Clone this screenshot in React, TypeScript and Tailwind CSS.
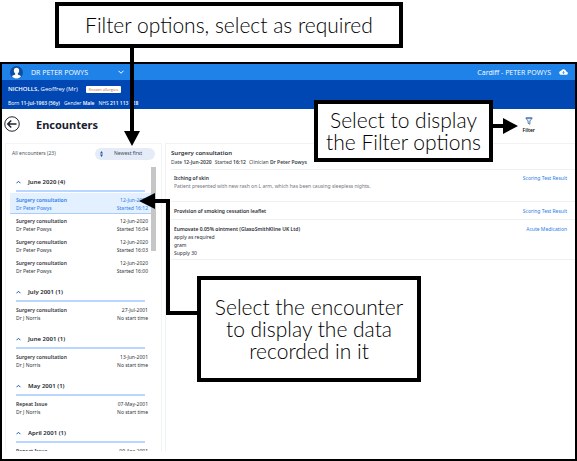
import React, { useState } from "react";
import clsx from "clsx";

interface Encounter {
  title: string;
  clinician: string;
  date: string;
  time: string;
}

interface EncounterGroup {
  label: string;
  encounters: Encounter[];
}

interface RecordEntry {
  title: string;
  lines: string[];
  muted?: boolean;
  link: string;
  className: string;
}

const GROUPS: EncounterGroup[] = [
  {
    label: "June 2020 (4)",
    encounters: [
      { title: "Surgery consultation", clinician: "Dr Peter Powys", date: "12-Jun-2020", time: "Started 16:12" },
      { title: "Surgery consultation", clinician: "Dr Peter Powys", date: "12-Jun-2020", time: "Started 16:04" },
      { title: "Surgery consultation", clinician: "Dr Peter Powys", date: "12-Jun-2020", time: "Started 16:03" },
      { title: "Surgery consultation", clinician: "Dr Peter Powys", date: "12-Jun-2020", time: "Started 16:00" },
    ],
  },
  {
    label: "July 2001 (1)",
    encounters: [
      { title: "Surgery consultation", clinician: "Dr J Norris", date: "27-Jul-2001", time: "No start time" },
    ],
  },
  {
    label: "June 2001 (1)",
    encounters: [
      { title: "Surgery consultation", clinician: "Dr J Norris", date: "13-Jun-2001", time: "No start time" },
    ],
  },
  {
    label: "May 2001 (1)",
    encounters: [{ title: "Repeat Issue", clinician: "Dr J Norris", date: "07-May-2001", time: "No start time" }],
  },
  {
    label: "April 2001 (1)",
    encounters: [{ title: "Repeat Issue", clinician: "Dr J Norris", date: "09-Apr-2001", time: "No start time" }],
  },
];

const ENTRIES: RecordEntry[] = [
  {
    title: "Itching of skin",
    lines: ["Patient presented with new rash on L arm, which has been causing sleepless nights."],
    muted: true,
    link: "Scoring Test Result",
    className: "min-h-8 pt-1",
  },
  {
    title: "Provision of smoking cessation leaflet",
    lines: [],
    link: "Scoring Test Result",
    className: "min-h-[18px] pt-[5px]",
  },
  {
    title: "Eumovate 0.05% ointment (GlaxoSmithKline UK Ltd)",
    lines: ["apply as required", "gram", "Supply 30"],
    link: "Acute Medication",
    className: "min-h-10 pt-[5px]",
  },
];

function TopBar() {
  return (
    <div className="flex h-4 shrink-0 items-center bg-[#1e82e8] pl-2 pr-[7px] text-[7px] leading-none text-white">
      <svg viewBox="0 0 26 26" className="size-[13px]" aria-hidden="true">
        <circle cx="13" cy="13" r="13" fill="#0d4f9e" />
        <path
          d="M13 3.5c-3.4 0-5.3 2.4-5.3 5.7 0 2.6 1.2 4.700 2.700 5.900v1.700c-2.500 1-5.400 1.900-6.400 4.100C6 23.300 9.500 25 13 25s7-1.700 9-4.100c-1-2.200-3.900-3.100-6.400-4.100v-1.700c1.500-1.200 2.700-3.300 2.700-5.900 0-3.300-1.900-5.700-5.300-5.700z"
          fill="#fff"
        />
      </svg>
      <button type="button" className="ml-2 flex items-center gap-[30px]">
        DR PETER POWYS
        <svg viewBox="0 0 12 8" className="h-1 w-[6px]" fill="none" stroke="#fff" strokeWidth="2" aria-hidden="true">
          <path d="M1 1.500l5 5 5-5" />
        </svg>
      </button>
      <span className="ml-auto">Cardiff - PETER POWYS</span>
      <svg viewBox="0 0 24 16" className="ml-2 h-[6px] w-[9px]" aria-hidden="true">
        <path
          d="M19 6.500C18.600 3 15.800.5 12.300.5 9.500.5 7.200 2 6.200 4.400 3 4.600.5 7 .5 10c0 3.100 2.600 5.500 5.700 5.500h12.500c2.700 0 4.800-2 4.800-4.500 0-2.400-2-4.400-4.500-4.500z"
          fill="#fff"
        />
        <path d="M12 13.500V7M9 9.500L12 6.500l3 3" fill="none" stroke="#1e82e8" strokeWidth="2" />
      </svg>
    </div>
  );
}

function PatientBanner() {
  return (
    <div className="flex h-[29px] shrink-0 flex-col justify-between bg-[#0047b3] px-[6px] pb-[2px] pt-[5px] text-white">
      <div className="flex items-center gap-2 text-[6px] leading-[8px]">
        <span>
          <b className="font-semibold">NICHOLLS,</b> Geoffrey (Mr)
        </span>
        <span className="rounded-[1px] bg-white px-[3px] text-[4px] leading-[7px] text-[#c4622d]">Known allergies</span>
      </div>
      <div className="flex gap-1 text-[5px] leading-[8px]">
        <span>
          Born <b className="font-semibold">11-Jul-1963 (56y)</b>
        </span>
        <span>
          Gender <b className="font-semibold">Male</b>
        </span>
        <span>
          NHS <b className="font-semibold">211 113 728</b>
        </span>
      </div>
    </div>
  );
}

function PageHeader() {
  return (
    <div className="flex h-[34px] shrink-0 items-start pl-[2px] pr-10 pt-[7px]">
      <button type="button" aria-label="Back">
        <svg viewBox="0 0 32 32" className="size-4" fill="none" stroke="#1f2530" aria-hidden="true">
          <circle cx="16" cy="16" r="14.500" strokeWidth="2" />
          <path d="M25 16H8M14.500 9L7.500 16l7 7" strokeWidth="3" />
        </svg>
      </button>
      <h1 className="ml-4 font-['Noto_Sans',sans-serif] text-[11px] font-bold leading-[18px] text-[#1a2030]">
        Encounters
      </h1>
      <button type="button" className="ml-auto flex flex-col items-center text-[5px] font-semibold leading-[8px]">
        <svg viewBox="0 0 16 16" className="my-px size-2" aria-hidden="true">
          <path d="M1.500 2h13L9.800 8v6.500l-3.600-2V8z" fill="#e8f1ff" stroke="#3c587c" strokeWidth="1.500" />
          <path d="M2 2h12" stroke="#1e6fd0" strokeWidth="2" />
        </svg>
        Filter
      </button>
    </div>
  );
}

function EncounterList() {
  const [selected, setSelected] = useState("0-0");

  return (
    <aside className="flex w-[157px] shrink-0 flex-col overflow-hidden border border-b-0 border-[#f3f4f6]">
      <div className="flex h-[23px] shrink-0 items-center justify-between pb-1 pl-[6px] pr-[6px] text-[5px]">
        <span className="text-[#4a4f58]">All encounters (23)</span>
        <button
          type="button"
          className="flex h-3 w-[60px] items-center gap-[11px] rounded-full bg-[#e6ecf7] pl-[5px] leading-none text-[#3b4a63]"
        >
          <svg viewBox="0 0 6 12" className="h-[6px] w-[3px]" fill="#1458b0" aria-hidden="true">
            <path d="M3 0l3 5H0zM3 12L0 7h6z" />
          </svg>
          Newest first
        </button>
      </div>
      <div className="flex min-h-0 grow">
        <div className="w-[145px] overflow-hidden pl-1">
          {GROUPS.map((group, g) => (
            <section key={group.label}>
              <h2 className="ml-[6px] mr-[6px] flex h-[25px] items-end gap-[7px] border-b-2 border-[#b8d6ff] pb-1 text-[6px] font-semibold leading-[8px] text-[#20242c]">
                <svg
                  viewBox="0 0 10 8"
                  className="mb-[2px] h-1 w-[5px]"
                  fill="none"
                  stroke="#1458b0"
                  strokeWidth="2"
                  aria-hidden="true"
                >
                  <path d="M1 6.500l4-4 4 4" />
                </svg>
                {group.label}
              </h2>
              <div className="pt-px">
                {group.encounters.map((item, i) => {
                  const id = `${g}-${i}`;
                  const isSelected = id === selected;
                  return (
                    <button
                      key={id}
                      type="button"
                      onClick={() => setSelected(id)}
                      className={clsx(
                        "flex h-[21px] w-full justify-between border-b pl-[6px] pr-[3px] pt-[3px] text-[5px] leading-[8px]",
                        isSelected
                          ? "border-[#a9ccf8] bg-[#e3f0ff] text-[#2b7ce9]"
                          : "border-transparent text-[#30343c]",
                      )}
                    >
                      <span className="text-left">
                        <b className="block font-semibold">{item.title}</b>
                        {item.clinician}
                      </span>
                      <span className="text-right">
                        {item.date}
                        <br />
                        {item.time}
                      </span>
                    </button>
                  );
                })}
              </div>
            </section>
          ))}
        </div>
        <div className="h-[84px] w-[5px] bg-[#c6c6c6]" />
      </div>
    </aside>
  );
}

function EncounterDetail() {
  return (
    <main className="min-w-0 grow border-l border-t border-[#f1f2f4] pl-[5px]">
      <h2 className="pt-1 text-[6px] font-semibold leading-[10px] text-[#2a2e36]">Surgery consultation</h2>
      <p className="flex h-[11px] gap-[3px] text-[5px] leading-[8px] text-[#3a3f48]">
        <span>
          Date <b className="font-semibold">12-Jun-2020</b>
        </span>
        <span>
          Started <b className="font-semibold">16:12</b>
        </span>
        <span>
          Clinician <b className="font-semibold">Dr Peter Powys</b>
        </span>
      </p>
      <div className="border-t border-[#eef0f2]">
        {ENTRIES.map((entry) => (
          <article
            key={entry.title}
            className={clsx(
              "flex justify-between border-b border-[#eef0f2] pl-[3px] pr-2 text-[5px] leading-[8px]",
              entry.className,
            )}
          >
            <div className={entry.muted ? "text-[#70757e]" : "text-[#2a2e36]"}>
              <h3 className="font-semibold text-[#2a2e36]">{entry.title}</h3>
              {entry.lines.map((line) => (
                <p key={line}>{line}</p>
              ))}
            </div>
            <a href="#" className="shrink-0 text-[#2b7ce9]">
              {entry.link}
            </a>
          </article>
        ))}
      </div>
    </main>
  );
}

// Help notes and arrows that sit on top of the application window
function Callouts() {
  return (
    <div className="pointer-events-none absolute inset-0 font-['Lato',sans-serif] text-[21px] font-light leading-[22px] text-black">
      <svg width="577" height="461" className="absolute left-0 top-0" aria-hidden="true">
        <path d="M132 46v88M491 126h16M199 313h-31V201h-18" fill="none" stroke="#000" strokeWidth="4" />
        <path d="M124 131h16l-8 15zM503 118v16l15-8zM155 193v16l-16-8z" />
      </svg>
      <div className="absolute left-[55px] top-[2px] flex h-[46px] w-[348px] items-center justify-center border-4 border-black bg-white">
        Filter options, select as required
      </div>
      <div className="absolute left-[314px] top-[100px] flex h-[62px] w-[179px] items-center justify-center border-4 border-black bg-white text-center">
        Select to display
        <br />
        the Filter options
      </div>
      <div className="absolute left-[197px] top-[276px] flex h-[106px] w-[224px] items-center justify-center border-4 border-black bg-white text-center">
        Select the encounter
        <br />
        to display the data
        <br />
        recorded in it
      </div>
    </div>
  );
}

export default function App() {
  return (
    <div className="relative flex h-screen flex-col bg-white pt-[62px] font-['Open_Sans','Noto_Sans',sans-serif]">
      <div className="flex min-h-0 grow flex-col border-2 border-black">
        <TopBar />
        <PatientBanner />
        <PageHeader />
        <div className="flex min-h-0 grow gap-[3px] pb-2 pl-[3px] font-['Noto_Sans','Open_Sans',sans-serif]">
          <EncounterList />
          <EncounterDetail />
        </div>
      </div>
      <Callouts />
    </div>
  );
}
